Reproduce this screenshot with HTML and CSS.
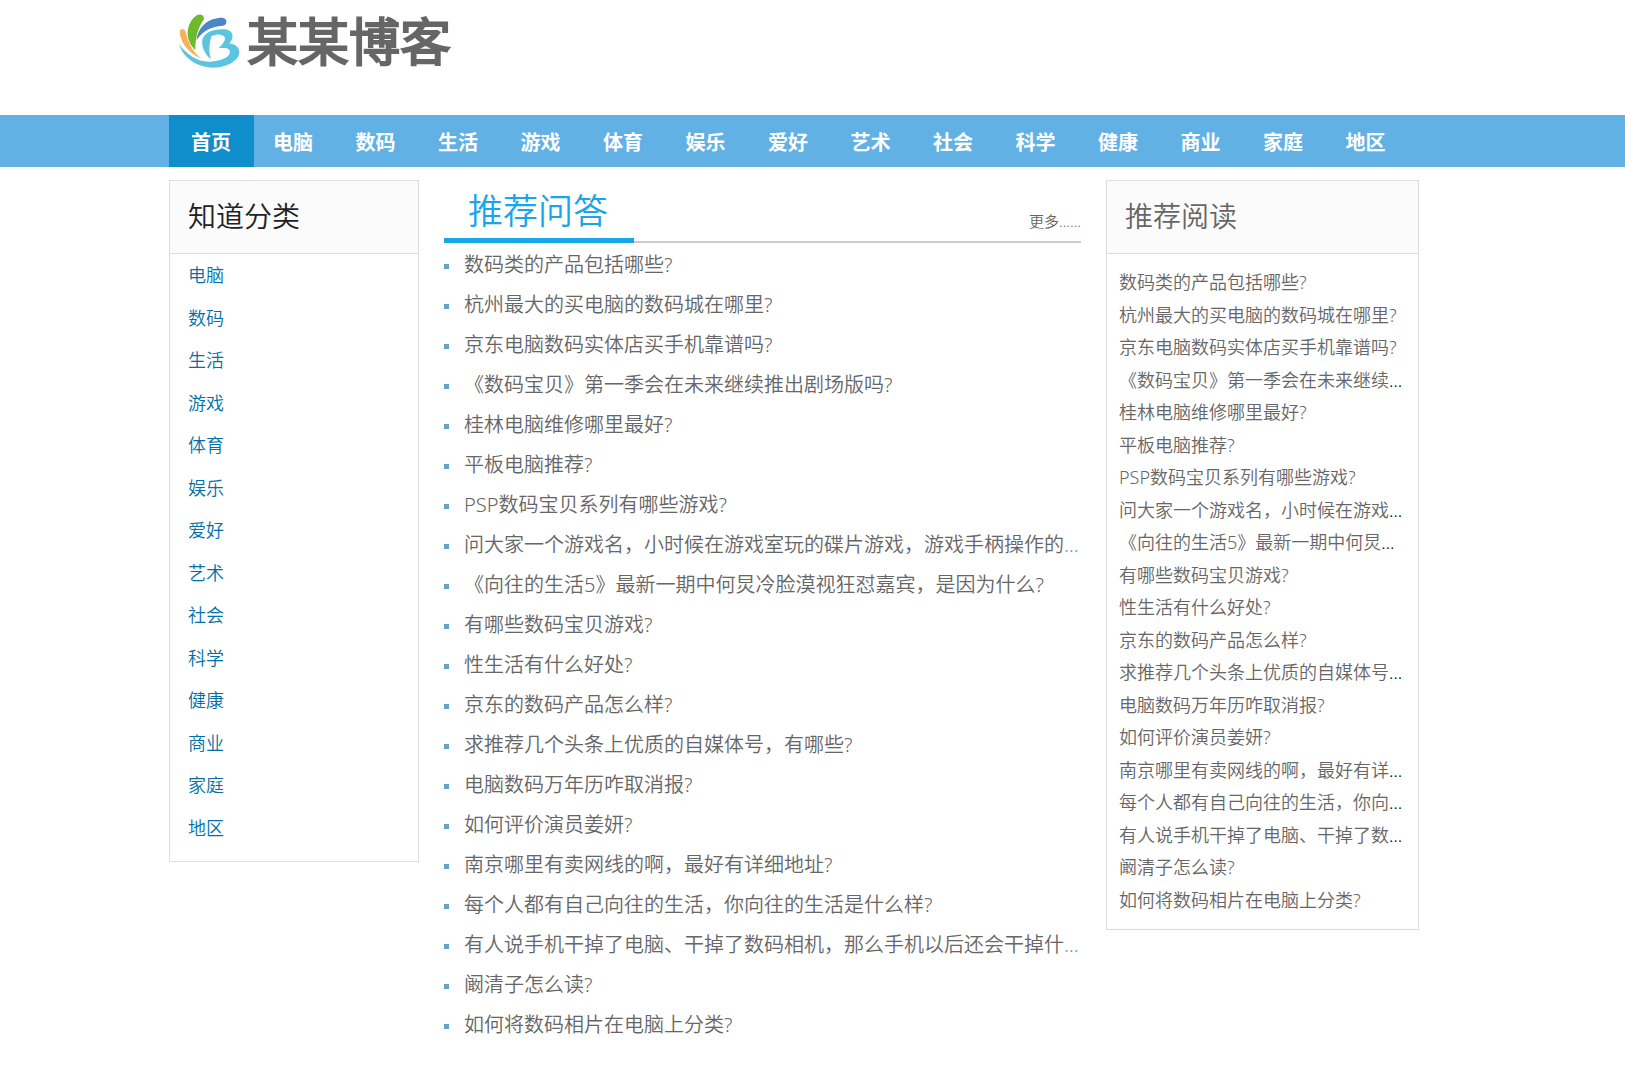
FILE: index.html
```html
<!DOCTYPE html>
<html lang="zh-CN">
<head>
    <meta charset="UTF-8">
    <meta name="viewport" content="width=device-width, initial-scale=1.0">
    <title>某某博客</title>
    <link rel="stylesheet" href="styles.css">
</head>
<body>

    <!-- 头部 -->
    <header class="header">
        <div class="wrap">
            <a class="logo" href="#">
                <svg class="logo-mark" viewBox="0 0 186 162" aria-hidden="true">
                    <path fill="#f6b35c" d="M5 54C5 43 19 42 23 53C29 82 43 111 70 134C34 118 8 90 5 54Z"/>
                    <path fill="#6fb92c" d="M29 62C28 35 41 13 58 3C69-2 81 5 77 17C60 40 52 70 52 108C38 95 30 78 29 62Z"/>
                    <path fill="#4a86c8" d="M56 78C60 38 90 11 134 11C149 13 149 33 135 35C95 37 72 54 56 78Z"/>
                    <path fill="#5bc4e0" d="M3 90C25 122 62 145 96 143C131 141 154 130 156 115C157 104 145 100 121 103C138 88 143 77 140 70C136 60 116 58 100 67C94 90 91 112 99 135C81 121 70 99 73 77C80 53 110 43 142 46C165 49 171 70 154 88C175 91 185 103 184 117C179 144 142 161 104 161C57 159 16 133 3 90Z"/>
                </svg>
                <span class="logo-text">某某博客</span>
            </a>
        </div>
    </header>

    <!-- 导航 -->
    <nav class="nav">
        <div class="wrap">
            <ul class="nav-list">
                <li class="active"><a href="#">首页</a></li>
                <li><a href="#">电脑</a></li>
                <li><a href="#">数码</a></li>
                <li><a href="#">生活</a></li>
                <li><a href="#">游戏</a></li>
                <li><a href="#">体育</a></li>
                <li><a href="#">娱乐</a></li>
                <li><a href="#">爱好</a></li>
                <li><a href="#">艺术</a></li>
                <li><a href="#">社会</a></li>
                <li><a href="#">科学</a></li>
                <li><a href="#">健康</a></li>
                <li><a href="#">商业</a></li>
                <li><a href="#">家庭</a></li>
                <li><a href="#">地区</a></li>
            </ul>
        </div>
    </nav>

    <div class="wrap">
        <div class="content">
            <!-- 左侧分类 -->
            <aside class="card category">
                <h2>知道分类</h2>
                <ul>
                    <li><a href="#">电脑</a></li>
                    <li><a href="#">数码</a></li>
                    <li><a href="#">生活</a></li>
                    <li><a href="#">游戏</a></li>
                    <li><a href="#">体育</a></li>
                    <li><a href="#">娱乐</a></li>
                    <li><a href="#">爱好</a></li>
                    <li><a href="#">艺术</a></li>
                    <li><a href="#">社会</a></li>
                    <li><a href="#">科学</a></li>
                    <li><a href="#">健康</a></li>
                    <li><a href="#">商业</a></li>
                    <li><a href="#">家庭</a></li>
                    <li><a href="#">地区</a></li>
                </ul>
            </aside>

            <!-- 推荐问答 -->
            <main class="question">
                <div class="question-title">
                    <h2>推荐问答</h2>
                    <a class="more" href="#">更多......</a>
                </div>
                <ul>
                    <li><a href="#">数码类的产品包括哪些?</a></li>
                    <li><a href="#">杭州最大的买电脑的数码城在哪里?</a></li>
                    <li><a href="#">京东电脑数码实体店买手机靠谱吗?</a></li>
                    <li><a href="#">《数码宝贝》第一季会在未来继续推出剧场版吗?</a></li>
                    <li><a href="#">桂林电脑维修哪里最好?</a></li>
                    <li><a href="#">平板电脑推荐?</a></li>
                    <li><a href="#">PSP数码宝贝系列有哪些游戏?</a></li>
                    <li><a href="#">问大家一个游戏名，小时候在游戏室玩的碟片游戏，游戏手柄操作的是什么?</a></li>
                    <li><a href="#">《向往的生活5》最新一期中何炅冷脸漠视狂怼嘉宾，是因为什么?</a></li>
                    <li><a href="#">有哪些数码宝贝游戏?</a></li>
                    <li><a href="#">性生活有什么好处?</a></li>
                    <li><a href="#">京东的数码产品怎么样?</a></li>
                    <li><a href="#">求推荐几个头条上优质的自媒体号，有哪些?</a></li>
                    <li><a href="#">电脑数码万年历咋取消报?</a></li>
                    <li><a href="#">如何评价演员姜妍?</a></li>
                    <li><a href="#">南京哪里有卖网线的啊，最好有详细地址?</a></li>
                    <li><a href="#">每个人都有自己向往的生活，你向往的生活是什么样?</a></li>
                    <li><a href="#">有人说手机干掉了电脑、干掉了数码相机，那么手机以后还会干掉什么东西?</a></li>
                    <li><a href="#">阚清子怎么读?</a></li>
                    <li><a href="#">如何将数码相片在电脑上分类?</a></li>
                </ul>
            </main>

            <!-- 推荐阅读 -->
            <aside class="card reading">
                <h2>推荐阅读</h2>
                <ul>
                    <li><a href="#">数码类的产品包括哪些?</a></li>
                    <li><a href="#">杭州最大的买电脑的数码城在哪里?</a></li>
                    <li><a href="#">京东电脑数码实体店买手机靠谱吗?</a></li>
                    <li><a href="#">《数码宝贝》第一季会在未来继续推出剧场版吗?</a></li>
                    <li><a href="#">桂林电脑维修哪里最好?</a></li>
                    <li><a href="#">平板电脑推荐?</a></li>
                    <li><a href="#">PSP数码宝贝系列有哪些游戏?</a></li>
                    <li><a href="#">问大家一个游戏名，小时候在游戏室玩的碟片游戏，游戏手柄操作的是什么?</a></li>
                    <li><a href="#">《向往的生活5》最新一期中何炅冷脸漠视狂怼嘉宾，是因为什么?</a></li>
                    <li><a href="#">有哪些数码宝贝游戏?</a></li>
                    <li><a href="#">性生活有什么好处?</a></li>
                    <li><a href="#">京东的数码产品怎么样?</a></li>
                    <li><a href="#">求推荐几个头条上优质的自媒体号，有哪些?</a></li>
                    <li><a href="#">电脑数码万年历咋取消报?</a></li>
                    <li><a href="#">如何评价演员姜妍?</a></li>
                    <li><a href="#">南京哪里有卖网线的啊，最好有详细地址?</a></li>
                    <li><a href="#">每个人都有自己向往的生活，你向往的生活是什么样?</a></li>
                    <li><a href="#">有人说手机干掉了电脑、干掉了数码相机，那么手机以后还会干掉什么东西?</a></li>
                    <li><a href="#">阚清子怎么读?</a></li>
                    <li><a href="#">如何将数码相片在电脑上分类?</a></li>
                </ul>
            </aside>
        </div>
    </div>

</body>
</html>
```
FILE: styles.css
```css
* {
    margin: 0;
    padding: 0;
    box-sizing: border-box;
}
body {
    font-family: "Noto Sans", "Noto Sans CJK SC", sans-serif;
    font-weight: 350;
    color: #000;
    background: #fff;
}
ul {
    list-style: none;
}
a {
    color: #666;
    text-decoration: none;
}
h2 {
    font-weight: 350;
}
.wrap {
    max-width: 1287px;
    margin: 0 auto;
    padding-right: 37px;
}

/* 头部 */
.header {
    height: 115px;
    padding-top: 12px;
}
.logo {
    display: inline-flex;
    align-items: center;
    gap: 7px;
    margin-left: 9px;
}
.logo-mark {
    width: 62px;
    height: 54px;
}
.logo-text {
    font-size: 51px;
    font-weight: 400;
    line-height: 58px;
    color: #666;
    -webkit-text-stroke: 2px #666;
}

/* 导航 */
.nav {
    background: #62b1e5;
}
.nav-list {
    display: flex;
    max-width: 1240px;
}
.nav-list li {
    flex: 1;
}
.nav-list .active {
    flex: none;
    width: 85px;
    background: #0f8ecb;
}
.nav-list a {
    display: block;
    padding: 4px 0 0 19px;
    font-size: 20px;
    font-weight: 700;
    line-height: 48px;
    color: #fff;
}
.nav-list .active a {
    padding-left: 22px;
}

/* 三栏 */
.content {
    display: grid;
    grid-template-columns: 250px 1fr 313px;
    gap: 25px;
    align-items: start;
    padding-top: 13px;
}
.card {
    border: 1px solid #ddd;
}
.card h2 {
    padding: 0 0 2px 18px;
    font-size: 28px;
    line-height: 70px;
    background: #fbfbfb;
    border-bottom: 1px solid #ddd;
}
.card ul {
    display: flex;
    flex-direction: column;
    font-size: 18px;
}
.card li {
    flex: 1;
}

/* 左侧分类 */
.category h2 {
    color: #222;
}
.category ul {
    min-height: 595px;
    margin-bottom: 12px;
    padding-left: 18px;
}
.category li {
    line-height: 42px;
}
.category a {
    color: #0270a8;
}

/* 推荐问答 */
.question {
    min-width: 0;
}
.question-title {
    display: flex;
    justify-content: space-between;
    align-items: flex-end;
    height: 63px;
    border-bottom: 2px solid #ccc;
}
.question-title h2 {
    width: 190px;
    margin-bottom: -2px;
    padding: 4px 0 0 24px;
    font-size: 35px;
    line-height: 54px;
    color: #18a5e9;
    border-bottom: 5px solid #18a5e9;
}
.more {
    font-size: 15px;
    line-height: 40px;
}
.question li {
    position: relative;
    padding: 4px 0 0 20px;
    font-size: 20px;
    line-height: 36px;
    color: #5fa2ca;
    white-space: nowrap;
    overflow: hidden;
    text-overflow: ellipsis;
}
.question li::before {
    content: "";
    position: absolute;
    left: 0;
    top: 21px;
    width: 5px;
    height: 5px;
    background: #61a5cb;
}

/* 推荐阅读 */
.reading h2 {
    color: #666;
}
.reading ul {
    min-height: 650px;
    margin: 12px 10px 13px 12px;
}
.reading li {
    line-height: 32px;
    white-space: nowrap;
    overflow: hidden;
    text-overflow: ellipsis;
}
```
